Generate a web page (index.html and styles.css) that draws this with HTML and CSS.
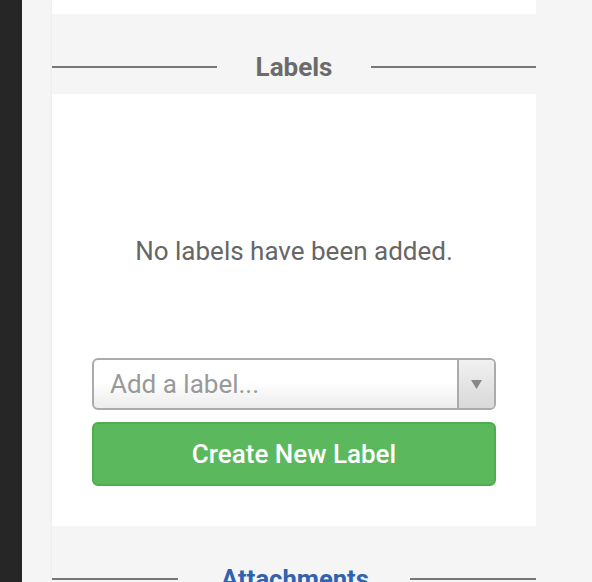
FILE: index.html
```html
<!DOCTYPE html>
<html>
<head>
<meta charset="utf-8">
<link rel="stylesheet" href="styles.css">
</head>
<body>
<div class="page">
  <div class="sidebar"></div>
  <div class="gutter"></div>
  <div class="panel">
    <div class="white-top"></div>
    <div class="section-head">
      <span class="line"></span>
      <span class="title">Labels</span>
      <span class="line"></span>
    </div>
    <div class="section-body">
      <p class="empty">No labels have been added.</p>
      <div class="select">
        <span class="placeholder">Add a label...</span>
        <span class="arrow"><svg width="11" height="9" viewBox="0 0 11 9"><polygon points="0,0 11,0 5.5,9" fill="#888"/></svg></span>
      </div>
      <button class="btn-create">Create New Label</button>
    </div>
    <div class="section-head attach">
      <span class="line"></span>
      <span class="title link">Attachments</span>
      <span class="line"></span>
    </div>
  </div>
  <div class="rest"></div>
</div>
</body>
</html>
```
FILE: styles.css
```css
html, body {
  margin: 0;
  padding: 0;
  height: 100%;
  overflow: hidden;
  background: #f5f5f5;
  font-family: Roboto, "Liberation Sans", sans-serif;
}
.page {
  display: flex;
  height: 582px;
  overflow: hidden;
}
.sidebar {
  width: 22px;
  flex: none;
  background: #262626;
}
.gutter {
  width: 30px;
  flex: none;
  background: #f5f5f5;
}
.panel {
  width: 484px;
  flex: none;
  background: #f5f5f5;
  box-shadow: 0 0 3px rgba(0,0,0,0.07);
  display: flex;
  flex-direction: column;
}
.panel > * {
  flex: none;
}
.rest {
  flex: 1;
  background: #f5f5f5;
}
.white-top {
  height: 14px;
  background: #fff;
}
.section-head {
  display: flex;
  align-items: center;
  padding: 38px 0 12px;
  height: 30px;
}
.section-head .line {
  flex: 1;
  height: 2px;
  background: #777;
}
.section-head .title {
  margin: 0 39px;
  font-size: 26px;
  line-height: 30px;
  font-weight: 700;
  color: #6b6b6b;
}
.section-head .title.link {
  color: #2f63b0;
  font-size: 25.6px;
  margin: 0 41px 0 43px;
}
.section-body {
  background: #fff;
  padding: 0 40px 40px;
  display: flex;
  flex-direction: column;
}
.empty {
  margin: 142px 0 92px;
  text-align: center;
  font-size: 26px;
  line-height: 30px;
  color: #666;
}
.select {
  height: 48px;
  border: 2px solid #ababab;
  border-radius: 6px;
  display: flex;
  align-items: stretch;
  background: linear-gradient(#fff 0%, #fff 45%, #ececec 100%);
  overflow: hidden;
}
.placeholder {
  flex: 1;
  display: flex;
  align-items: center;
  padding-left: 16px;
  font-size: 26px;
  color: #999;
}
.arrow {
  width: 35px;
  border-left: 2px solid #ababab;
  display: flex;
  align-items: center;
  justify-content: center;
  background: linear-gradient(#f1f1f1, #d9d9d9);
}
.btn-create {
  margin-top: 12px;
  height: 64px;
  border: 2px solid #4cae4c;
  border-radius: 6px;
  background: #5cb85c;
  color: #fff;
  font-family: Roboto, "Liberation Sans", sans-serif;
  font-size: 26px;
  font-weight: 500;
  cursor: pointer;
}
```
